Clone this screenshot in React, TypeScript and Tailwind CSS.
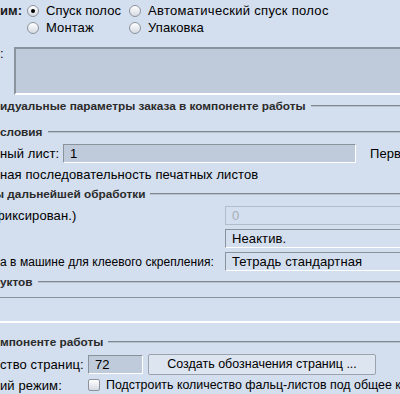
import React from 'react';

const Radio = ({ checked }: { checked?: boolean }) => (
  <span className="w-[12px] h-[12px] shrink-0 rounded-full border border-[#8c939c] bg-gradient-to-b from-white to-[#d5dae2] flex items-center justify-center">
    {checked && <span className="w-[4px] h-[4px] rounded-full bg-black" />}
  </span>
);

const Heading = ({ text, className = '' }: { text: string; className?: string }) => (
  <div className={`flex items-center h-[16px] gap-[5px] ${className}`}>
    <span className="font-bold text-[11.8px] tracking-normal text-[#2b2b2b] whitespace-nowrap shrink-0">{text}</span>
    <div className="flex-1 h-[2px] border-t border-[#7f8791] bg-[#b9c3cf] -mt-[2px]" />
  </div>
);

const Field = ({ children, className = '' }: { children?: React.ReactNode; className?: string }) => (
  <div className={`h-[19px] shrink-0 flex items-center pl-[6px] border border-t-[#8a929c] border-l-[#8a929c] border-b-white border-r-white whitespace-nowrap ${className}`}>
    {children}
  </div>
);

export default function App() {
  return (
    <div className="w-[400px] h-[394px] overflow-hidden bg-[#d3deee] font-['Liberation_Sans',Arial,sans-serif] text-[13px] tracking-[0.1px] text-black leading-none">
      <div className="flex flex-col pt-[2px]">
        <div className="flex items-center h-[17px] whitespace-nowrap">
          <span className="w-[27px] shrink-0 font-bold text-[#1a1a1a]">им:</span>
          <div className="flex items-center gap-[7px] w-[102px] shrink-0">
            <Radio checked />
            <span>Спуск полос</span>
          </div>
          <div className="flex items-center gap-[7px] shrink-0">
            <Radio />
            <span className="tracking-[0.3px]">Автоматический спуск полос</span>
          </div>
        </div>
        <div className="flex items-center h-[17px] pl-[27px]">
          <div className="flex items-center gap-[7px] w-[102px] shrink-0">
            <Radio />
            <span>Монтаж</span>
          </div>
          <div className="flex items-center gap-[7px]">
            <Radio />
            <span>Упаковка</span>
          </div>
        </div>

        <div className="flex mt-[11px] h-[48px]">
          <span className="w-[14px] shrink-0">:</span>
          <div className="flex-1 bg-[#bfcada] border-t-2 border-l-2 border-t-[#8a939e] border-l-[#8a939e] border-b-2 border-b-white" />
        </div>

        <Heading text="идуальные параметры заказа в компоненте работы" className="mt-[4px]" />
        <Heading text="словия" className="mt-[10px]" />

        <div className="flex items-center mt-[3px] whitespace-nowrap">
          <span className="w-[63px] shrink-0">ный лист:</span>
          <Field className="w-[293px] bg-[#bfcada]">1</Field>
          <span className="ml-[14px] shrink-0">Перв</span>
        </div>
        <div className="flex items-center h-[17px] mt-[3px] whitespace-nowrap">ная последовательность печатных листов</div>

        <Heading text="ы дальнейшей обработки" className="mt-[4px] -ml-[6px]" />

        <div className="flex items-center mt-[3px] whitespace-nowrap">
          <span className="w-[231px] shrink-0 -ml-[6px]">фиксирован.)</span>
          <div className="w-[190px] shrink-0 h-[19px] flex items-center pl-[6px] border border-[#b3bcc8] text-[#a6aeb9]">0</div>
        </div>
        <div className="flex items-center mt-[4px]">
          <span className="w-[225px] shrink-0" />
          <Field className="w-[190px]">Неактив.</Field>
        </div>
        <div className="flex items-center mt-[4px] whitespace-nowrap">
          <span className="w-[225px] shrink-0 text-[12px] tracking-[0.05px]">а в машине для клеевого скрепления:</span>
          <Field className="w-[190px]">Тетрадь стандартная</Field>
        </div>

        <Heading text="уктов" className="mt-[4px]" />

        <div className="mt-[6px] h-[26px] border-t border-t-[#8a929c] border-b-2 border-b-white" />

        <Heading text="мпоненте работы" className="mt-[12px]" />

        <div className="flex items-center mt-[3px] h-[21px] whitespace-nowrap">
          <span className="w-[88px] shrink-0">ство страниц:</span>
          <Field className="w-[55px] bg-[#bfcada]">72</Field>
          <button className="ml-[5px] w-[228px] shrink-0 h-[21px] bg-[#dde5f1] border border-[#9aa3ae] rounded-[2px] text-black text-[12.5px] tracking-normal">
            Создать обозначения страниц ...
          </button>
        </div>
        <div className="flex items-center mt-[2px] h-[16px] whitespace-nowrap">
          <span className="w-[88px] shrink-0">ий режим:</span>
          <span className="w-[12px] h-[12px] rounded-[2px] border border-[#8c939c] bg-gradient-to-b from-white to-[#d5dae2] shrink-0" />
          <span className="ml-[6px] shrink-0 text-[12.4px] tracking-normal">Подстроить количество фальц-листов под общее ко</span>
        </div>
      </div>
    </div>
  );
}
